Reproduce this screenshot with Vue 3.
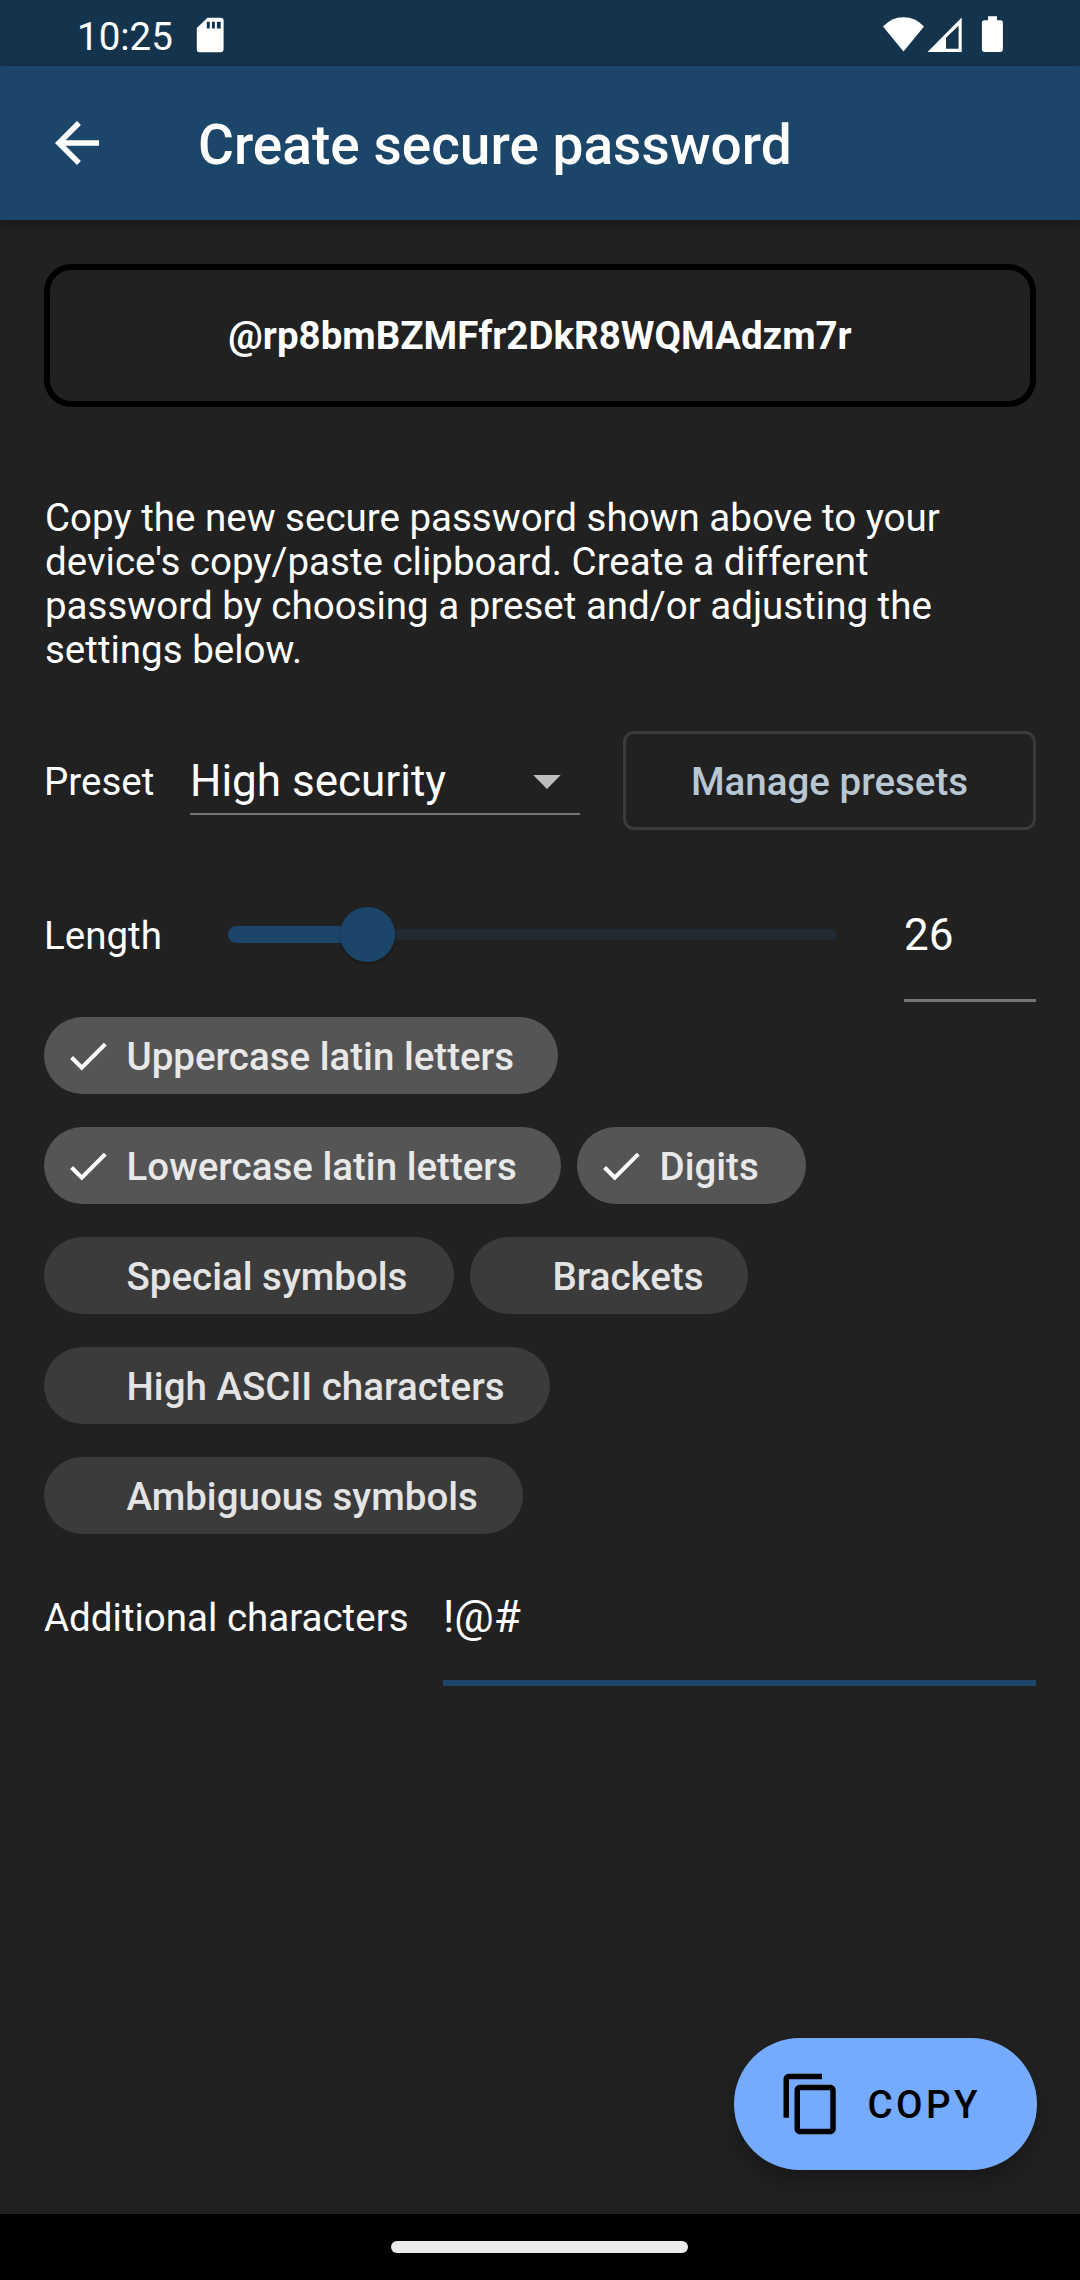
<script setup>
import { ref, computed } from 'vue'

const password = ref('@rp8bmBZMFfr2DkR8WQMAdzm7r')
const preset = ref('High security')
const length = ref(26)
const extra = ref('!@#')

const min = 4
const max = 100
const progress = computed(() => ((length.value - min) / (max - min)) * 100)

const chipRows = ref([
  [{ label: 'Uppercase latin letters', on: true, width: 514 }],
  [
    { label: 'Lowercase latin letters', on: true, width: 517 },
    { label: 'Digits', on: true, width: 229 },
  ],
  [
    { label: 'Special symbols', on: false, width: 410 },
    { label: 'Brackets', on: false, width: 278 },
  ],
  [{ label: 'High ASCII characters', on: false, width: 506 }],
  [{ label: 'Ambiguous symbols', on: false, width: 479 }],
])
</script>

<template>
  <div class="screen">
    <div class="status">
      <span class="time">10:25</span>
      <svg class="sd" width="28" height="36" viewBox="0 0 28 36">
        <path fill="#fff" fill-rule="evenodd" d="M11.5 0.8H24.5Q27.6 0.8 27.6 3.6V32Q27.6 35.2 24.5 35.2H3.2Q0.8 35.2 0.8 32V11ZM10.8 4.8V11.6H13.8V4.8ZM15.9 4.8V11.6H18.9V4.8ZM20.900 4.8V11.6H24.7V4.8Z" />
      </svg>
      <svg class="signals" width="124" height="40" viewBox="0 0 124 40">
        <path fill="#fff" d="M3 12.5Q11.500 3.300 23.500 3.300T44 12.500L23.500 37.500Z" />
        <path fill="#fff" fill-rule="evenodd" d="M47.500 38H81.700V3.500ZM66 34.800V23.800L78.600 11.700V34.800Z" />
        <path fill="#fff" d="M108 2.300H117V6.200H120.500Q122.900 6.200 122.900 8.600V35.600Q122.900 38 120.500 38H104.300Q101.900 38 101.900 35.600V8.600Q101.900 6.200 104.300 6.200H108Z" />
      </svg>
    </div>

    <header class="appbar">
      <svg class="back" width="66" height="66" viewBox="0 0 24 24">
        <path fill="#fff" d="M20 11H7.830l5.590-5.590L12 4l-8 8 8 8 1.410-1.410L7.830 13H20v-2z" />
      </svg>
      <h1>Create secure password</h1>
    </header>

    <main>
      <div class="password">{{ password }}</div>
      <p class="hint">Copy the new secure password shown above to your device's copy/paste clipboard. Create a different password by choosing a preset and/or adjusting the settings below.</p>

      <div class="row preset-row">
        <span class="label">Preset</span>
        <div class="select">
          <span>{{ preset }}</span>
          <svg width="28" height="14" viewBox="0 0 28 14"><path fill="#bdbdbd" d="M0.200 0H27.700L14 14Z" /></svg>
        </div>
        <button class="manage">Manage presets</button>
      </div>

      <div class="row length-row">
        <span class="label">Length</span>
        <div class="slider">
          <div class="rail"></div>
          <div class="active" :style="{ width: progress + '%' }"></div>
          <div class="thumb" :style="{ left: progress + '%' }"></div>
        </div>
        <div class="number">{{ length }}</div>
      </div>

      <div class="chips">
        <div v-for="(row, i) in chipRows" :key="i" class="chip-row">
          <div v-for="c in row" :key="c.label" class="chip" :class="{ on: c.on }" :style="{ width: c.width + 'px' }">
            <svg class="check" width="50" height="50" viewBox="0 0 24 24">
              <path v-if="c.on" fill="#fff" d="M9 16.170L4.830 12l-1.420 1.410L9 19 21 7l-1.410-1.410z" />
            </svg>
            <span>{{ c.label }}</span>
          </div>
        </div>
      </div>

      <div class="row extra-row">
        <span class="label">Additional characters</span>
        <div class="extra">{{ extra }}</div>
      </div>
    </main>

    <div class="fab-area">
      <button class="fab">
        <svg width="66" height="66" viewBox="0 0 24 24">
          <path fill="#000" d="M16 1H4c-1.100 0-2 .9-2 2v14h2V3h12V1zm3 4H8c-1.100 0-2 .9-2 2v14c0 1.100.9 2 2 2h11c1.100 0 2-.9 2-2V7c0-1.100-.9-2-2-2zm0 16H8V7h11v14z" />
        </svg>
        <span>COPY</span>
      </button>
    </div>

    <div class="navbar"><div class="pill"></div></div>
  </div>
</template>

<style>
body {
  margin: 0;
  background: #212121;
}
</style>

<style scoped>
.screen {
  display: flex;
  flex-direction: column;
  width: 1080px;
  height: 2280px;
  overflow: hidden;
  background: #212121;
  color: #fff;
  font-family: Roboto, sans-serif;
  font-size: 38.5px;
}
.screen * {
  box-sizing: border-box;
}
.status {
  display: flex;
  height: 66px;
  flex: none;
  background: #14344e;
  padding-left: 77px;
}
.time {
  width: 119px;
  line-height: 74px;
}
.sd {
  margin-top: 17px;
}
.signals {
  margin: 14px 0 0 656px;
}
.appbar {
  display: flex;
  align-items: center;
  flex: none;
  height: 154px;
  padding-left: 44px;
  background: #1b466a;
  box-shadow: 0 4px 12px rgba(0, 0, 0, 0.35);
}
.appbar h1 {
  margin: 4px 0 0 88px;
  font-size: 55px;
  line-height: 64px;
  font-weight: 500;
  white-space: nowrap;
}
main {
  flex: 1;
  padding: 44px 44px 0;
}
.password {
  height: 143px;
  border: 6px solid #000;
  border-radius: 27.5px;
  line-height: 131px;
  text-align: center;
  font-weight: 700;
}
.hint {
  width: 940px;
  margin: 89px 0 0 1px;
  line-height: 44px;
}
.row {
  display: flex;
}
.label {
  white-space: nowrap;
}
.preset-row {
  margin-top: 59px;
  height: 99px;
}
.preset-row .label {
  width: 146px;
  line-height: 101px;
}
.select {
  display: flex;
  justify-content: space-between;
  width: 390px;
  height: 84px;
  padding-right: 19.5px;
  border-bottom: 2px solid #757575;
  font-size: 44px;
  line-height: 101px;
}
.select svg {
  margin-top: 44px;
}
.manage {
  width: 413px;
  height: 99px;
  margin-left: 43px;
  padding: 2px 0 0;
  border: 3px solid #3b3b3b;
  border-radius: 11px;
  background: none;
  color: #b9c7d3;
  font: 500 38.5px/91px Roboto, sans-serif;
}
.length-row {
  margin-top: 55px;
  height: 118px;
}
.length-row .label {
  width: 184px;
  line-height: 102px;
}
.slider {
  position: relative;
  width: 609px;
  height: 100px;
}
.rail,
.active,
.thumb {
  position: absolute;
}
.rail {
  left: 0;
  right: 0;
  top: 44px;
  height: 11px;
  border-radius: 6px;
  background: #212a33;
}
.active {
  left: 0;
  top: 41px;
  height: 17px;
  border-radius: 9px;
  background: #1b466a;
}
.thumb {
  top: 22px;
  width: 55px;
  height: 55px;
  margin-left: -27.5px;
  border-radius: 50%;
  background: #1b466a;
  box-shadow: 0 2px 3px rgba(0, 0, 0, 0.3);
}
.number {
  width: 132px;
  height: 117px;
  margin-left: 67px;
  border-bottom: 3px solid #757575;
  font-size: 44px;
  line-height: 101px;
}
.chips {
  display: flex;
  flex-direction: column;
  gap: 33px;
  margin-top: 14px;
}
.chip-row {
  display: flex;
  gap: 16px;
}
.chip {
  display: flex;
  height: 77px;
  border-radius: 39px;
  background: #3b3b3b;
  color: #e4e4e4;
  font-weight: 500;
  line-height: 79px;
  white-space: nowrap;
}
.chip.on {
  background: #555;
  color: #e8e8e8;
}
.check {
  margin: 14px 13.5px 0 19px;
}
.extra-row {
  margin-top: 34px;
}
.extra-row .label {
  width: 399px;
  line-height: 100px;
}
.extra {
  flex: 1;
  height: 118px;
  border-bottom: 6px solid #1b466a;
  font-size: 44px;
  line-height: 98px;
}
.fab-area {
  display: flex;
  justify-content: flex-end;
  flex: none;
  padding: 0 43.5px 44px 0;
}
.fab {
  display: flex;
  align-items: center;
  width: 302.5px;
  height: 132px;
  padding: 0 0 0 44px;
  border: 0;
  border-radius: 66px;
  background: #75abff;
  color: #000;
  font: 500 38.5px/44px Roboto, sans-serif;
  letter-spacing: 3.44px;
  box-shadow: 0 12px 22px rgba(0, 0, 0, 0.28);
}
.fab span {
  margin: 2px 0 0 23.5px;
}
.navbar {
  display: flex;
  flex: none;
  height: 66px;
  padding: 27px 0 0 391px;
  background: #000;
}
.pill {
  width: 297px;
  height: 12px;
  border-radius: 6px;
  background: #ebebeb;
}
</style>
